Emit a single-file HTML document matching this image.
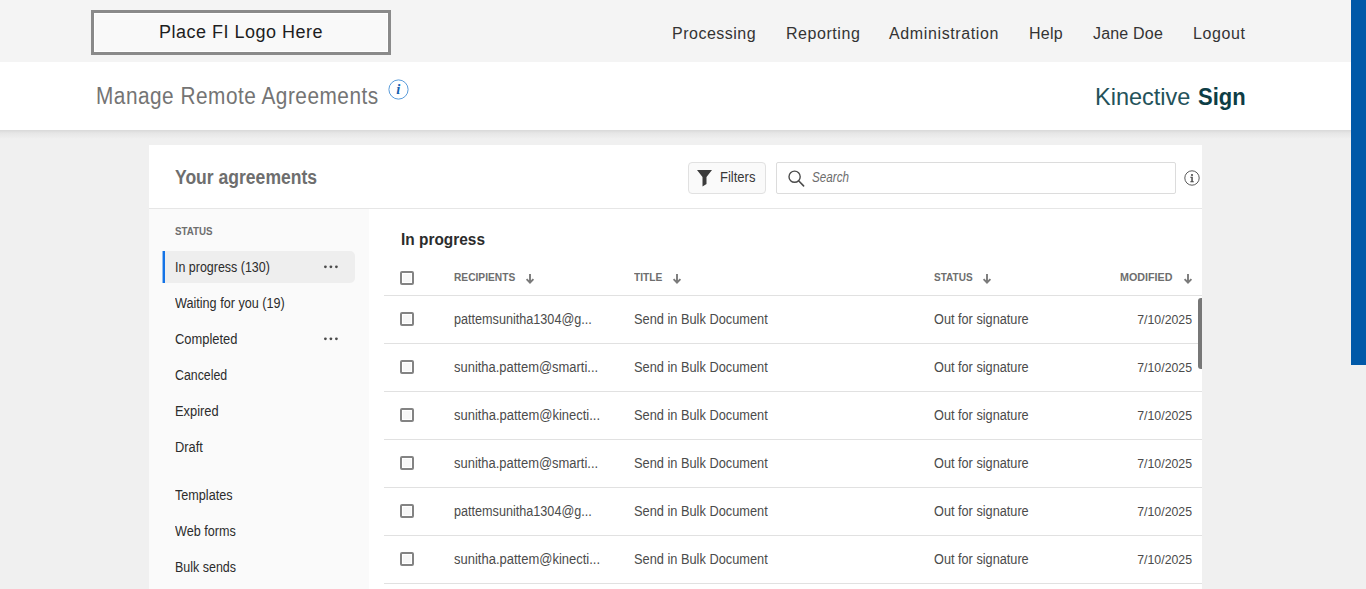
<!DOCTYPE html>
<html><head><meta charset="utf-8">
<style>
*{margin:0;padding:0;box-sizing:border-box}
html,body{width:1366px;height:589px;overflow:hidden;background:#f0f0f0;font-family:"Liberation Sans",sans-serif}
.a{position:absolute}
.t{position:absolute;white-space:nowrap;line-height:1}
.cb{position:absolute;left:400px;width:14px;height:14px;border:2px solid #838383;border-radius:2px;background:#f7f7f7;box-shadow:inset 0 0 0 1px #fff}
.rl{position:absolute;left:384px;width:818px;height:1px;background:#e1e1e1}
</style></head><body>
<div class="a" style="left:0;top:0;width:1366px;height:62px;background:#f4f4f4"></div>
<div class="a" style="left:91px;top:10px;width:300px;height:45px;border:3px solid #8a8a8a;background:#f9f9f9;box-shadow:inset 0 0 0 1px #fff"></div>
<div class="t" style="left:159px;top:23px;font-size:18px;color:#1e1e1e;letter-spacing:0.5px">Place FI Logo Here</div>
<div class="t" style="left:672px;top:26px;font-size:16px;color:#333;letter-spacing:0.5px">Processing</div>
<div class="t" style="left:786px;top:26px;font-size:16px;color:#333;letter-spacing:0.55px">Reporting</div>
<div class="t" style="left:889px;top:26px;font-size:16px;color:#333;letter-spacing:0.62px">Administration</div>
<div class="t" style="left:1029px;top:26px;font-size:16px;color:#333;letter-spacing:0.27px">Help</div>
<div class="t" style="left:1093px;top:26px;font-size:16px;color:#333;letter-spacing:0.19px">Jane Doe</div>
<div class="t" style="left:1193px;top:26px;font-size:16px;color:#333;letter-spacing:0.6px">Logout</div>
<div class="a" style="left:0;top:62px;width:1366px;height:68px;background:#fff"></div>
<div class="a" style="left:0;top:130px;width:1366px;height:9px;background:linear-gradient(#d9d9d9,#e6e6e6 35%,#f0f0f0)"></div>
<div class="t" style="left:96px;top:85px;font-size:23.1px;color:#747474;letter-spacing:0.57px;transform:scaleX(0.9);transform-origin:0 0">Manage Remote Agreements</div>
<svg class="a" style="left:388px;top:78.5px" width="21" height="21" viewBox="0 0 21 21"><circle cx="10.5" cy="10.5" r="9.6" fill="#fff" stroke="#4a92d6" stroke-width="0.9"/><text x="10.3" y="15.4" text-anchor="middle" font-family="Liberation Serif" font-style="italic" font-weight="700" font-size="14.5" fill="#1560b0">i</text></svg>
<div class="t" style="left:1095px;top:85px;font-size:24px;color:#24525a;transform:scaleX(0.98);transform-origin:0 0">Kinective</div>
<div class="t" style="left:1197.5px;top:85px;font-size:24px;color:#0d3d45;font-weight:700;transform:scaleX(0.915);transform-origin:0 0">Sign</div>
<div class="a" style="left:149px;top:145px;width:1053px;height:444px;background:#fff"></div>
<div class="t" style="left:175px;top:168px;font-size:19.5px;color:#6e6e6e;font-weight:700;transform:scaleX(0.9);transform-origin:0 0">Your agreements</div>
<div class="a" style="left:149px;top:208px;width:1053px;height:1px;background:#e6e6e6"></div>
<div class="a" style="left:149px;top:209px;width:220px;height:380px;background:#fafafa"></div>
<div class="a" style="left:688px;top:162px;width:78px;height:32px;background:#fafafa;border:1px solid #e1e1e1;border-radius:4px"></div>
<svg class="a" style="left:697px;top:170px" width="16" height="17" viewBox="0 0 16 17"><path d="M0 0H15L9.5 7V14L5.5 16.5V7Z" fill="#3c3c3c"/></svg>
<div class="t" style="left:720px;top:170px;font-size:14px;color:#383838;transform:scaleX(0.93);transform-origin:0 0">Filters</div>
<div class="a" style="left:776px;top:162px;width:400px;height:32px;background:#fff;border:1px solid #dcdcdc;border-radius:2px"></div>
<svg class="a" style="left:787px;top:169px" width="19" height="19" viewBox="0 0 19 19"><circle cx="7.6" cy="7.7" r="5.6" fill="none" stroke="#4b4b4b" stroke-width="1.4"/><path d="M11.6 11.8L16.6 16.9" stroke="#4b4b4b" stroke-width="1.6" stroke-linecap="round"/></svg>
<div class="t" style="left:812px;top:170px;font-size:14px;color:#6e6e6e;font-style:italic;transform:scaleX(0.834);transform-origin:0 0">Search</div>
<svg class="a" style="left:1184px;top:170px" width="16" height="16" viewBox="0 0 16 16"><circle cx="8" cy="8" r="7.2" fill="none" stroke="#5a5a5a" stroke-width="1"/><circle cx="8" cy="5" r="1.1" fill="#4b4b4b"/><path d="M6.3 6.7H8.8V11.2H9.8V12.2H6.3V11.2H7.3V7.7H6.3Z" fill="#4b4b4b"/></svg>
<div class="t" style="left:175px;top:226px;font-size:11px;color:#6e6e6e;font-weight:700;transform:scaleX(0.888);transform-origin:0 0">STATUS</div>
<div class="a" style="left:165px;top:251px;width:190px;height:32px;background:#eeeeee;border-radius:0 5px 5px 0"></div><div class="a" style="left:162px;top:251px;width:1px;height:32px;background:#8fbdf2"></div><div class="a" style="left:163px;top:251px;width:2px;height:32px;background:#1473e6"></div>
<div class="t" style="left:175px;top:259.5px;font-size:14px;color:#2c2c2c;transform:scaleX(0.89);transform-origin:0 0">In progress (130)</div>
<div class="t" style="left:175px;top:295.5px;font-size:14px;color:#2c2c2c;transform:scaleX(0.902);transform-origin:0 0">Waiting for you (19)</div>
<div class="t" style="left:175px;top:331.5px;font-size:14px;color:#2c2c2c;transform:scaleX(0.922);transform-origin:0 0">Completed</div>
<div class="t" style="left:175px;top:367.5px;font-size:14px;color:#2c2c2c;transform:scaleX(0.882);transform-origin:0 0">Canceled</div>
<div class="t" style="left:175px;top:403.5px;font-size:14px;color:#2c2c2c;transform:scaleX(0.919);transform-origin:0 0">Expired</div>
<div class="t" style="left:175px;top:439.5px;font-size:14px;color:#2c2c2c;transform:scaleX(0.917);transform-origin:0 0">Draft</div>
<div class="t" style="left:175px;top:487.5px;font-size:14px;color:#2c2c2c;transform:scaleX(0.901);transform-origin:0 0">Templates</div>
<div class="t" style="left:175px;top:523.5px;font-size:14px;color:#2c2c2c;transform:scaleX(0.9);transform-origin:0 0">Web forms</div>
<div class="t" style="left:175px;top:559.5px;font-size:14px;color:#2c2c2c;transform:scaleX(0.891);transform-origin:0 0">Bulk sends</div>
<svg class="a" style="left:323px;top:265px" width="16" height="4" viewBox="0 0 16 4"><circle cx="2.4" cy="1.8" r="1.4" fill="#4b4b4b"/><circle cx="7.9" cy="1.8" r="1.4" fill="#4b4b4b"/><circle cx="13.4" cy="1.8" r="1.4" fill="#4b4b4b"/></svg>
<svg class="a" style="left:323px;top:337px" width="16" height="4" viewBox="0 0 16 4"><circle cx="2.4" cy="1.8" r="1.4" fill="#4b4b4b"/><circle cx="7.9" cy="1.8" r="1.4" fill="#4b4b4b"/><circle cx="13.4" cy="1.8" r="1.4" fill="#4b4b4b"/></svg>
<div class="t" style="left:400.8px;top:231px;font-size:17px;color:#2c2c2c;font-weight:700;transform:scaleX(0.907);transform-origin:0 0">In progress</div>
<div class="cb" style="top:271px"></div>
<div class="t" style="left:454px;top:272px;font-size:11px;color:#6e6e6e;font-weight:700;transform:scaleX(0.927);transform-origin:0 0">RECIPIENTS</div>
<div class="t" style="left:634px;top:272px;font-size:11px;color:#6e6e6e;font-weight:700;transform:scaleX(0.93);transform-origin:0 0">TITLE</div>
<div class="t" style="left:934px;top:272px;font-size:11px;color:#6e6e6e;font-weight:700;transform:scaleX(0.91);transform-origin:0 0">STATUS</div>
<div class="t" style="left:1120px;top:272px;font-size:11px;color:#6e6e6e;font-weight:700;transform:scaleX(0.976);transform-origin:0 0">MODIFIED</div>
<svg class="a" style="left:525px;top:274px" width="10" height="10" viewBox="0 0 10 10"><path d="M5 0V8.5M1.6 5.2L5 8.6L8.4 5.2" fill="none" stroke="#7a7a7a" stroke-width="1.9"/></svg>
<svg class="a" style="left:672px;top:274px" width="10" height="10" viewBox="0 0 10 10"><path d="M5 0V8.5M1.6 5.2L5 8.6L8.4 5.2" fill="none" stroke="#7a7a7a" stroke-width="1.9"/></svg>
<svg class="a" style="left:982px;top:274px" width="10" height="10" viewBox="0 0 10 10"><path d="M5 0V8.5M1.6 5.2L5 8.6L8.4 5.2" fill="none" stroke="#7a7a7a" stroke-width="1.9"/></svg>
<svg class="a" style="left:1183px;top:274px" width="10" height="10" viewBox="0 0 10 10"><path d="M5 0V8.5M1.6 5.2L5 8.6L8.4 5.2" fill="none" stroke="#7a7a7a" stroke-width="1.9"/></svg>
<div class="rl" style="top:295px"></div>
<div class="cb" style="top:312px"></div>
<div class="t" style="left:454px;top:311.5px;font-size:14px;color:#4b4b4b;transform:scaleX(0.902);transform-origin:0 0">pattemsunitha1304@g...</div>
<div class="t" style="left:634px;top:311.5px;font-size:14px;color:#4b4b4b;transform:scaleX(0.914);transform-origin:0 0">Send in Bulk Document</div>
<div class="t" style="left:934px;top:311.5px;font-size:14px;color:#4b4b4b;transform:scaleX(0.908);transform-origin:0 0">Out for signature</div>
<div class="t" style="right:174px;top:313.5px;font-size:12.6px;color:#4b4b4b;transform:scaleX(0.978);transform-origin:100% 0">7/10/2025</div>
<div class="rl" style="top:343px"></div>
<div class="cb" style="top:360px"></div>
<div class="t" style="left:454px;top:359.5px;font-size:14px;color:#4b4b4b;transform:scaleX(0.925);transform-origin:0 0">sunitha.pattem@smarti...</div>
<div class="t" style="left:634px;top:359.5px;font-size:14px;color:#4b4b4b;transform:scaleX(0.914);transform-origin:0 0">Send in Bulk Document</div>
<div class="t" style="left:934px;top:359.5px;font-size:14px;color:#4b4b4b;transform:scaleX(0.908);transform-origin:0 0">Out for signature</div>
<div class="t" style="right:174px;top:361.5px;font-size:12.6px;color:#4b4b4b;transform:scaleX(0.978);transform-origin:100% 0">7/10/2025</div>
<div class="rl" style="top:391px"></div>
<div class="cb" style="top:408px"></div>
<div class="t" style="left:454px;top:407.5px;font-size:14px;color:#4b4b4b;transform:scaleX(0.928);transform-origin:0 0">sunitha.pattem@kinecti...</div>
<div class="t" style="left:634px;top:407.5px;font-size:14px;color:#4b4b4b;transform:scaleX(0.914);transform-origin:0 0">Send in Bulk Document</div>
<div class="t" style="left:934px;top:407.5px;font-size:14px;color:#4b4b4b;transform:scaleX(0.908);transform-origin:0 0">Out for signature</div>
<div class="t" style="right:174px;top:409.5px;font-size:12.6px;color:#4b4b4b;transform:scaleX(0.978);transform-origin:100% 0">7/10/2025</div>
<div class="rl" style="top:439px"></div>
<div class="cb" style="top:456px"></div>
<div class="t" style="left:454px;top:455.5px;font-size:14px;color:#4b4b4b;transform:scaleX(0.925);transform-origin:0 0">sunitha.pattem@smarti...</div>
<div class="t" style="left:634px;top:455.5px;font-size:14px;color:#4b4b4b;transform:scaleX(0.914);transform-origin:0 0">Send in Bulk Document</div>
<div class="t" style="left:934px;top:455.5px;font-size:14px;color:#4b4b4b;transform:scaleX(0.908);transform-origin:0 0">Out for signature</div>
<div class="t" style="right:174px;top:457.5px;font-size:12.6px;color:#4b4b4b;transform:scaleX(0.978);transform-origin:100% 0">7/10/2025</div>
<div class="rl" style="top:487px"></div>
<div class="cb" style="top:504px"></div>
<div class="t" style="left:454px;top:503.5px;font-size:14px;color:#4b4b4b;transform:scaleX(0.902);transform-origin:0 0">pattemsunitha1304@g...</div>
<div class="t" style="left:634px;top:503.5px;font-size:14px;color:#4b4b4b;transform:scaleX(0.914);transform-origin:0 0">Send in Bulk Document</div>
<div class="t" style="left:934px;top:503.5px;font-size:14px;color:#4b4b4b;transform:scaleX(0.908);transform-origin:0 0">Out for signature</div>
<div class="t" style="right:174px;top:505.5px;font-size:12.6px;color:#4b4b4b;transform:scaleX(0.978);transform-origin:100% 0">7/10/2025</div>
<div class="rl" style="top:535px"></div>
<div class="cb" style="top:552px"></div>
<div class="t" style="left:454px;top:551.5px;font-size:14px;color:#4b4b4b;transform:scaleX(0.928);transform-origin:0 0">sunitha.pattem@kinecti...</div>
<div class="t" style="left:634px;top:551.5px;font-size:14px;color:#4b4b4b;transform:scaleX(0.914);transform-origin:0 0">Send in Bulk Document</div>
<div class="t" style="left:934px;top:551.5px;font-size:14px;color:#4b4b4b;transform:scaleX(0.908);transform-origin:0 0">Out for signature</div>
<div class="t" style="right:174px;top:553.5px;font-size:12.6px;color:#4b4b4b;transform:scaleX(0.978);transform-origin:100% 0">7/10/2025</div>
<div class="rl" style="top:583px"></div>
<div class="a" style="left:1198px;top:298px;width:4px;height:71px;background:#777;border-radius:3px 0 0 3px"></div>
<div class="a" style="left:1351px;top:0;width:15px;height:365px;background:#0059a8"></div>
</body></html>
